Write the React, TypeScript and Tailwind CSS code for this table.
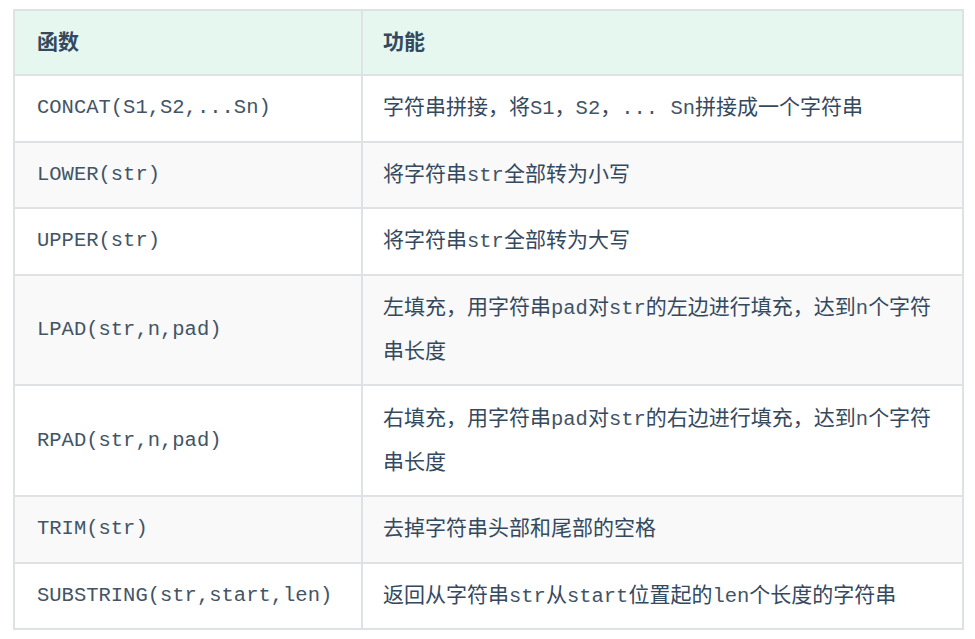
import React from "react";

type Part = { t: string; code?: boolean };
type Row = { fn: string; desc: Part[] };

const rows: Row[] = [
  {
    fn: "CONCAT(S1,S2,...Sn)",
    desc: [
      { t: "字符串拼接，将" },
      { t: "S1", code: true },
      { t: "，" },
      { t: "S2", code: true },
      { t: "，" },
      { t: "... Sn", code: true },
      { t: "拼接成一个字符串" },
    ],
  },
  {
    fn: "LOWER(str)",
    desc: [{ t: "将字符串" }, { t: "str", code: true }, { t: "全部转为小写" }],
  },
  {
    fn: "UPPER(str)",
    desc: [{ t: "将字符串" }, { t: "str", code: true }, { t: "全部转为大写" }],
  },
  {
    fn: "LPAD(str,n,pad)",
    desc: [
      { t: "左填充，用字符串" },
      { t: "pad", code: true },
      { t: "对" },
      { t: "str", code: true },
      { t: "的左边进行填充，达到" },
      { t: "n", code: true },
      { t: "个字符串长度" },
    ],
  },
  {
    fn: "RPAD(str,n,pad)",
    desc: [
      { t: "右填充，用字符串" },
      { t: "pad", code: true },
      { t: "对" },
      { t: "str", code: true },
      { t: "的右边进行填充，达到" },
      { t: "n", code: true },
      { t: "个字符串长度" },
    ],
  },
  {
    fn: "TRIM(str)",
    desc: [{ t: "去掉字符串头部和尾部的空格" }],
  },
  {
    fn: "SUBSTRING(str,start,len)",
    desc: [
      { t: "返回从字符串" },
      { t: "str", code: true },
      { t: "从" },
      { t: "start", code: true },
      { t: "位置起的" },
      { t: "len", code: true },
      { t: "个长度的字符串" },
    ],
  },
];

const mono = "font-['Liberation_Mono',monospace] text-[20.5px] text-[#425466]";

export default function App() {
  return (
    <div className="min-h-[639px] bg-white pl-[13px] pt-[9px] font-['Noto_Sans_CJK_SC',sans-serif] text-[21px] text-[#34495e]">
      <table className="w-[951px] table-fixed border-collapse border-2 border-[#dfe2e5]">
        <colgroup>
          <col className="w-[348px]" />
          <col />
        </colgroup>
        <thead>
          <tr className="bg-[#e6f7f0]">
            <th className="border-2 border-[#dfe2e5] pb-[12px] pl-[22px] pt-[7px] text-left font-bold leading-[44px]">
              函数
            </th>
            <th className="border-2 border-[#dfe2e5] pb-[12px] pl-[20px] pt-[7px] text-left font-bold leading-[44px]">
              功能
            </th>
          </tr>
        </thead>
        <tbody>
          {rows.map((row, i) => (
            <tr key={row.fn} className={i % 2 === 1 ? "bg-[#f9f9f9]" : "bg-white"}>
              <td className={`border-2 border-[#dfe2e5] py-[10.3px] pl-[22px] leading-[44px] ${mono}`}>
                {row.fn}
              </td>
              <td className="border-2 border-[#dfe2e5] pb-[13.3px] pl-[20px] pr-[20px] pt-[7.3px] leading-[44px]">
                {row.desc.map((p, j) =>
                  p.code ? (
                    <span key={j} className={`${mono} whitespace-pre leading-none`}>
                      {p.t}
                    </span>
                  ) : (
                    <span key={j}>{p.t}</span>
                  )
                )}
              </td>
            </tr>
          ))}
        </tbody>
      </table>
    </div>
  );
}
